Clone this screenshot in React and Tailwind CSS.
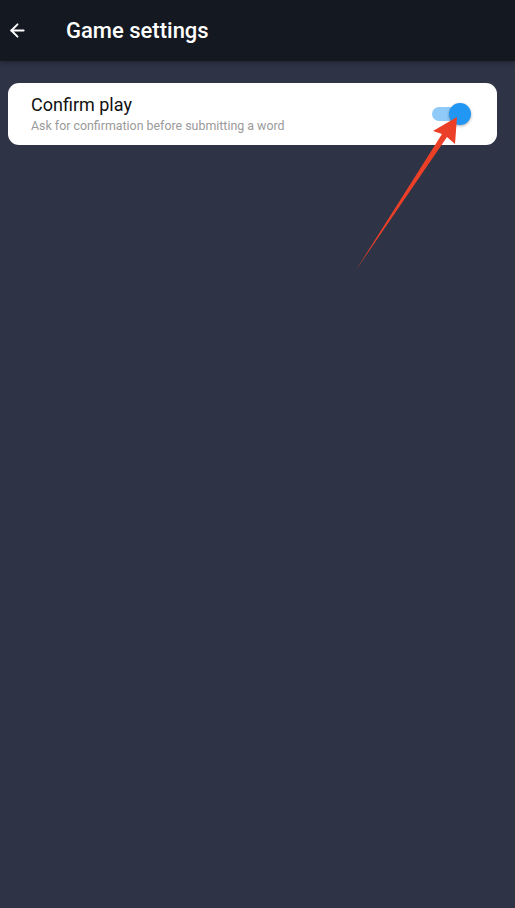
import { ArrowLeft } from 'lucide-react';

function Toggle({ on }) {
  return (
    <div className="relative w-[39px] h-[24px] flex items-center">
      <div className={`w-[34px] h-[14px] rounded-full ${on ? 'bg-[#90caf9]' : 'bg-gray-300'}`} />
      <div
        className={`absolute top-[1px] w-[22px] h-[22px] rounded-full shadow-[0_1px_3px_rgba(0,0,0,0.35)] ${
          on ? 'left-[17px] bg-[#2196f3]' : 'left-0 bg-white'
        }`}
      />
    </div>
  );
}

export default function App() {
  return (
    <div className="relative w-[515px] h-[908px] bg-[#2e3446] font-['Roboto',sans-serif] overflow-hidden">
      <header className="h-[61px] bg-[#141821] flex items-center shadow-[0_2px_4px_rgba(0,0,0,0.3)]">
        <button className="w-[36px] pl-[7px] text-white">
          <ArrowLeft size={21} strokeWidth={2.2} />
        </button>
        <h1 className="ml-[30px] text-white text-[22px] font-medium">Game settings</h1>
      </header>

      <div className="pl-[8px] pr-[18px] pt-[22px]">
        <div className="bg-white rounded-[11px] h-[62px] pl-[23px] pr-[26px] flex items-center justify-between">
          <div className="flex flex-col pt-[1px]">
            <span className="text-[18px] leading-[22px] text-[#111]">Confirm play</span>
            <span className="text-[12.4px] leading-[19px] text-[#9a9a9a]">
              Ask for confirmation before submitting a word
            </span>
          </div>
          <Toggle on />
        </div>
      </div>

      {/* annotation arrow */}
      <svg className="absolute left-0 top-0 pointer-events-none" width="515" height="908">
        <polygon
          points="356,270 442,134 433,131 457,117 455,144 447,137"
          fill="#ec3f27"
        />
      </svg>
    </div>
  );
}
